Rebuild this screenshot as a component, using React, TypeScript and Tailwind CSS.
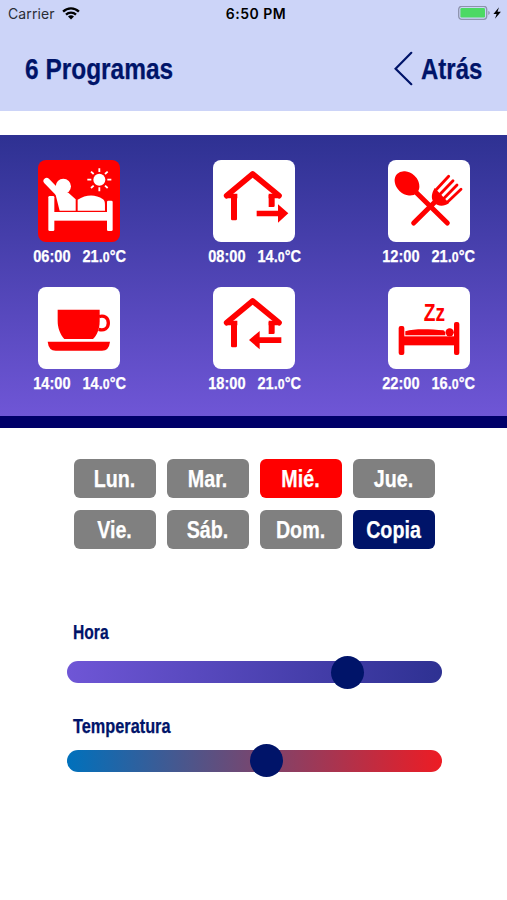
import type { ReactNode } from "react"

const days = [
    { name: "Lun.", color: "bg-[#808080]" },
    { name: "Mar.", color: "bg-[#808080]" },
    { name: "Mié.", color: "bg-[#ff0000]" },
    { name: "Jue.", color: "bg-[#808080]" },
    { name: "Vie.", color: "bg-[#808080]" },
    { name: "Sáb.", color: "bg-[#808080]" },
    { name: "Dom.", color: "bg-[#808080]" },
    { name: "Copia", color: "bg-[#001469]" },
]

export default function App() {
    return <div className="flex flex-col w-[507px] h-[900px] overflow-hidden bg-white font-['Liberation_Sans',sans-serif] font-bold text-[#001469] [-webkit-text-stroke:0.25px]">
        <header className="h-[110.5px] shrink-0 bg-[#ccd4f8]">
            <StatusBar />
            <div className="flex items-center justify-between h-[82px] px-[25px] text-[30px]">
                <h1 className="origin-left scale-x-[0.815]">6 Programas</h1>
                <button className="flex items-center gap-[8px]">
                    <svg className="w-[19px] h-[36px]" viewBox="0 0 19 36" fill="none" stroke="#001469" strokeWidth="2.2" strokeLinecap="round"><path d="M17.3 1.8 1.6 17.7l15.7 15.5" /></svg>
                    <span className="block w-[61.5px] text-left origin-left scale-x-[0.8]">Atrás</span>
                </button>
            </div>
        </header>
        <section className="mt-[24.5px] h-[293px] shrink-0 border-b-[12px] border-[#000069] bg-linear-to-b/srgb from-[#2e3192] to-[#6f56d6] pt-[25px] pl-[20.4px] pr-[19px]">
            <div className="flex justify-between">
                <Program time="06:00" deg="21" active><WakeIcon /></Program>
                <Program time="08:00" deg="14"><HouseIcon><path d="M186 181h64v-19l31 27-31 28v-19h-64z" /></HouseIcon></Program>
                <Program time="12:00" deg="21"><CutleryIcon /></Program>
            </div>
            <div className="flex justify-between mt-[18px]">
                <Program time="14:00" deg="14"><CupIcon /></Program>
                <Program time="18:00" deg="21"><HouseIcon><path d="M260 180h-65v-19l-32 27 32 28v-19h65z" /></HouseIcon></Program>
                <Program time="22:00" deg="16"><SleepIcon /></Program>
            </div>
        </section>
        <div className="grid grid-cols-4 gap-x-[11px] gap-y-[12px] mt-[31px] ml-[73.5px] w-[361px]">
            {days.map((d) => <button key={d.name} className={`h-[39px] rounded-md text-white text-[24px] leading-[40px] ${d.color}`}>
                <span className="block scale-x-[0.82] -ml-px">{d.name}</span>
            </button>)}
        </div>
        <div className="mt-[69px] ml-[66.5px] w-[375px]">
            <div className="pl-[6px] h-[43px] text-[19.3px] leading-[29px]"><span className="inline-block origin-left scale-x-[0.81]">Hora</span></div>
            <Slider left={264} track="bg-linear-to-r/srgb from-[#6f56d6] to-[#2e3192]" />
            <div className="pl-[6px] pt-[29px] h-[66.5px] text-[19.3px] leading-[29px]"><span className="inline-block origin-left scale-x-[0.845]">Temperatura</span></div>
            <Slider left={183.5} track="bg-linear-to-r/srgb from-[#0071bc] to-[#ed1c24]" />
        </div>
    </div>
}

function StatusBar() {
    return <div className="grid grid-cols-3 items-center h-[27.5px] pl-[8px] pr-[5px] font-['Inter',sans-serif] text-[14px] text-black [-webkit-text-stroke:0px]">
        <div className="flex items-center gap-[7px] font-normal text-[#2a2d35] tracking-[0.1px]">
            Carrier
            <svg className="w-[18px] h-[13px]" viewBox="0 0 18 13" fill="none" stroke="#000" strokeWidth="2.3">
                <path d="M1.1 4.6a11.2 11.2 0 0 1 15.8 0" />
                <path d="M4 7.6a7.1 7.1 0 0 1 10 0" />
                <path d="M9 12.6 6 9.6a4.3 4.3 0 0 1 6 0z" fill="#000" stroke="none" />
            </svg>
        </div>
        <div className="pl-[2px] text-center font-semibold tracking-[0.5px]">6:50 PM</div>
        <div className="flex justify-end">
            <svg className="w-[44px] h-[15px]" viewBox="0 0 44 15">
                <rect x=".7" y=".3" width="28" height="13" rx="3" fill="none" stroke="#8d93ac" strokeWidth="1.3" />
                <rect x="2.4" y="2.1" width="24.6" height="9.4" rx="1.3" fill="#4cd964" />
                <path d="M30.3 4.7c2 .8 2 3.4 0 4.2z" fill="#8d93ac" />
                <path d="m41 1.2-5.6 6.7h3.2L37 12.7l5.9-6.9h-3.4z" fill="#000" />
            </svg>
        </div>
    </div>
}

function Program({ time, deg, active, children }: { time: string, deg: string, active?: boolean, children: ReactNode }) {
    return <div className="flex flex-col items-center w-[118px]">
        <div className={`w-[82px] h-[82px] rounded-lg ${active ? "bg-[#ff0000]" : "bg-white"}`}>{children}</div>
        <div className="flex gap-[14px] h-[27px] text-[17.2px] leading-[29px] text-white whitespace-nowrap scale-x-[0.85]">
            <span>{time}</span>
            <span>{deg}.<span className="text-[14.5px]">0</span>°C</span>
        </div>
    </div>
}

function Slider({ left, track }: { left: number, track: string }) {
    return <div className={`h-[22px] rounded-full flex items-center ${track}`}>
        <div className="w-[33px] h-[33px] shrink-0 rounded-full bg-[#001469]" style={{ marginLeft: left }}></div>
    </div>
}

function WakeIcon() {
    return <svg viewBox="55 29 246 246" fill="#fff">
        <rect x="86" y="137" width="18" height="105" rx="4" />
        <rect x="262" y="151" width="17" height="91" rx="4" />
        <rect x="95" y="185" width="175" height="26" />
        <circle cx="131" cy="108" r="23" />
        <path d="M81 92 124 136" stroke="#fff" strokeWidth="19" strokeLinecap="round" />
        <path d="M106 126 120 181h48v-34l-22-20z" />
        <path d="M174 181v-33c24-15 52-18 76-1 7 5 6 14 6 34z" />
        <circle cx="239" cy="88" r="18" />
        <path d="M239 54v11M239 111v12M203 88h12M263 88h12M214 64l8 7M256 106l8 7M264 64l-8 7M222 106l-8 7" stroke="#fff" strokeWidth="5.5" />
    </svg>
}

function HouseIcon({ children }: { children: ReactNode }) {
    return <svg viewBox="55 29 246 246" fill="#ff0000">
        <path d="M96 136 174 71 253 136" fill="none" stroke="#ff0000" strokeWidth="17" strokeLinecap="round" strokeLinejoin="round" />
        <path d="M94 144h34v-14h-22zM222 144h33l-12-14h-21z" />
        <path d="M109 136h18v70q0 4-4 4h-10q-4 0-4-4zM222 134h18v32q0 4-4 4h-14z" />
        {children}
    </svg>
}

function CutleryIcon() {
    return <svg viewBox="55 29 246 246" fill="#ff0000" stroke="#ff0000" strokeLinecap="round">
        <ellipse cx="112" cy="99" rx="41" ry="32" transform="rotate(43 112 99)" stroke="none" />
        <path d="M135 122 233 218" strokeWidth="15" />
        <path d="M132 218 210 141" strokeWidth="15" />
        <path d="M237 78 198 120M250 91 211 132M262 104 223 144M274 117 233 156" strokeWidth="8.5" />
        <path d="M195 113c-9 15-12 31-3 42 11 14 31 15 46 3z" stroke="none" />
    </svg>
}

function CupIcon() {
    return <svg viewBox="55 27 246 246" fill="#ff0000">
        <path d="M114 95h126v34c0 24-8 42-20 54h-86c-13-14-20-34-20-54z" />
        <path d="M238 116c15-5 28 3 28 19s-13 24-29 19" fill="none" stroke="#ff0000" strokeWidth="10" />
        <path d="M84 191h187q-3 27-24 27H108q-21 0-24-27z" />
    </svg>
}

function SleepIcon() {
    return <svg viewBox="55 27 246 246" fill="#ff0000">
        <text x="162" y="128" fontSize="72" textLength="64" lengthAdjust="spacingAndGlyphs">Zz</text>
        <rect x="87" y="144" width="17" height="87" rx="6" />
        <rect x="253" y="132" width="16" height="99" rx="6" />
        <rect x="95" y="175" width="166" height="27" />
        <path d="M107 172v-12c28-9 76-6 114-3 4 1 6 5 6 15z" />
        <circle cx="240" cy="163" r="12.5" />
    </svg>
}
